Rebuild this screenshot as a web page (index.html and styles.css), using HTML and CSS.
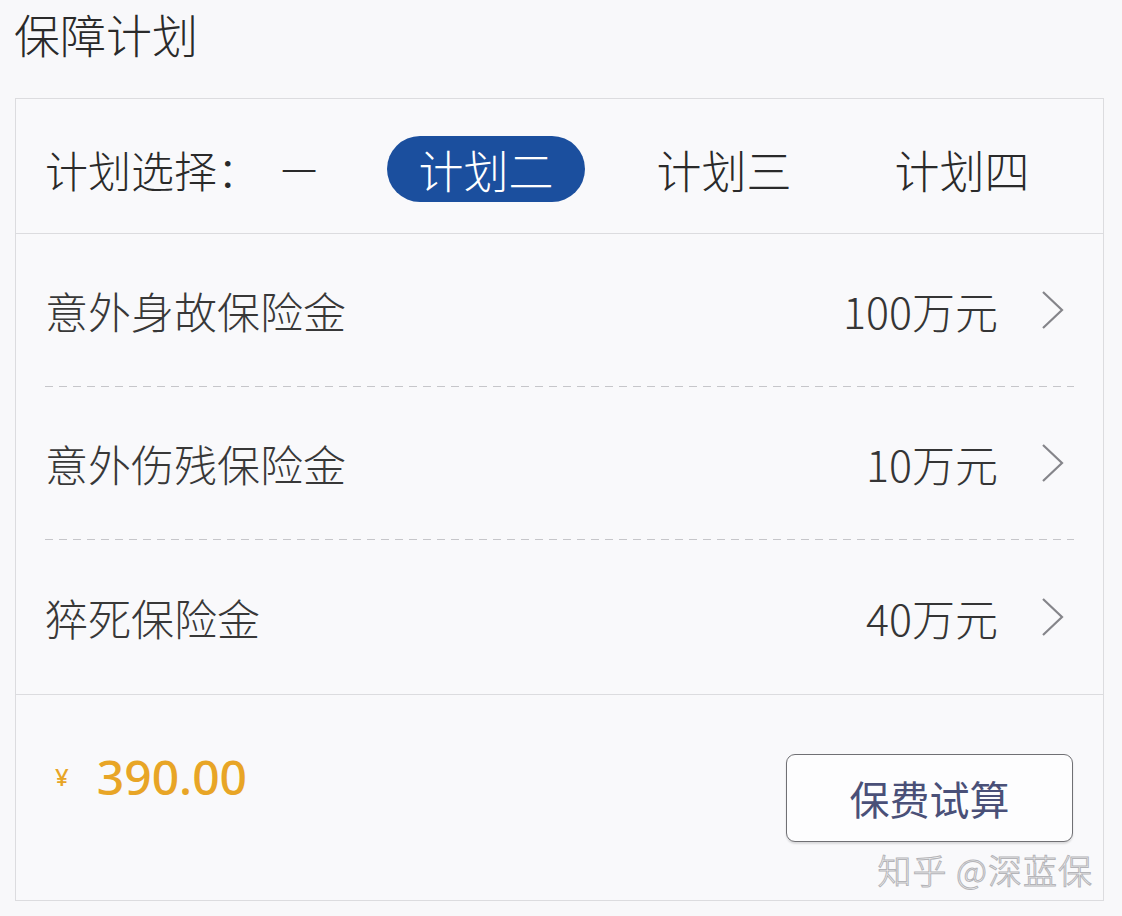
FILE: index.html
```html
<!DOCTYPE html>
<html lang="zh-CN">
<head>
<meta charset="utf-8">
<title>保障计划</title>
<link rel="stylesheet" href="styles.css">
</head>
<body>
<h1 class="title">保障计划</h1>
<section class="card">
  <div class="plan-bar">
    <span class="plan-label">计划选择：</span>
    <span class="plan-opt plan-opt-first">一</span>
    <span class="plan-opt active">计划二</span>
    <span class="plan-opt">计划三</span>
    <span class="plan-opt">计划四</span>
  </div>
  <div class="rows">
    <div class="row">
      <span class="row-name">意外身故保险金</span>
      <span class="row-value">100万元</span>
      <svg class="chev" viewBox="0 0 24 40" width="24" height="40"><polyline points="3,2 22,20 3,38" fill="none" stroke="#85858a" stroke-width="2.2"/></svg>
    </div>
    <div class="row">
      <span class="row-name">意外伤残保险金</span>
      <span class="row-value">10万元</span>
      <svg class="chev" viewBox="0 0 24 40" width="24" height="40"><polyline points="3,2 22,20 3,38" fill="none" stroke="#85858a" stroke-width="2.2"/></svg>
    </div>
    <div class="row">
      <span class="row-name">猝死保险金</span>
      <span class="row-value">40万元</span>
      <svg class="chev" viewBox="0 0 24 40" width="24" height="40"><polyline points="3,2 22,20 3,38" fill="none" stroke="#85858a" stroke-width="2.2"/></svg>
    </div>
  </div>
  <div class="footer">
    <div class="price"><span class="yen">¥</span><span class="amount">390.00</span></div>
    <button class="calc-btn">保费试算</button>
  </div>
  <div class="watermark">知乎 @深蓝保</div>
</section>
</body>
</html>
```
FILE: styles.css
```css
html, body {
  margin: 0;
  padding: 0;
  background: #f8f8fa;
}
body {
  font-family: "Noto Sans CJK SC", "Noto Sans", sans-serif;
  font-weight: 300;
  color: #444;
  width: 1122px;
  height: 916px;
  overflow: hidden;
}
.title {
  margin: 0 0 31px 0;
  padding-left: 14px;
  line-height: 67px;
  font-size: 46px;
  font-weight: 300;
  color: #2a2a2a;
}
.card {
  position: relative;
  margin-left: 15px;
  width: 1087px;
  height: 801px;
  border: 1px solid #dcdcdf;
  background: #f9f9fb;
  display: flex;
  flex-direction: column;
}
.plan-bar {
  height: 128px;
  padding-top: 6px;
  border-bottom: 1px solid #dcdcdf;
  display: flex;
  align-items: center;
  padding-left: 29px;
}
.plan-label {
  font-size: 43px;
  color: #2a2a2a;
  width: 214px;
  white-space: nowrap;
}
.plan-opt {
  display: inline-flex;
  align-items: center;
  justify-content: center;
  height: 66px;
  width: 198px;
  border-radius: 33px;
  font-size: 45px;
  color: #2a2a2a;
  margin-right: 40px;
}
.plan-opt-first {
  width: 80px;
  margin-right: 48px;
  font-size: 36px;
}
.plan-opt.active {
  background: #1b4f9e;
  color: #fff;
}
.rows {
  display: flex;
  flex-direction: column;
}
.row {
  height: 152px;
  margin: 0 29px;
  display: flex;
  align-items: center;
  background-image: repeating-linear-gradient(90deg, #c6c6ca 0 8px, transparent 8px 14px);
  background-size: 100% 1px;
  background-repeat: no-repeat;
  background-position: left bottom;
  padding-bottom: 1px;
}
.row:last-child {
  background-image: none;
  height: 154px;
  margin: 0;
  padding: 0 29px;
  border-bottom: 1px solid #dcdcdf;
}
.row-name {
  flex: 1;
  font-size: 43px;
  color: #383838;
}
.row-value {
  font-size: 43px;
  color: #353535;
  margin-right: 42px;
}
.chev {
  margin-right: 10px;
  flex: none;
}
.footer {
  flex: 1;
  display: flex;
  justify-content: space-between;
  align-items: flex-start;
  padding: 57px 30px 0 39px;
}
.price {
  display: flex;
  align-items: center;
  height: 48px;
  color: #e8a526;
}
.yen {
  font-family: "Noto Sans", sans-serif;
  font-weight: 500;
  font-size: 24px;
  margin-right: 28px;
}
.amount {
  font-family: "Noto Sans", sans-serif;
  font-size: 48px;
  font-weight: 500;
}
.calc-btn {
  margin-top: 2px;
  width: 287px;
  height: 88px;
  border: 1.5px solid #707074;
  border-radius: 9px;
  background: #fdfdfe;
  box-shadow: 0 2px 2px rgba(0,0,0,0.12);
  font-family: "Noto Sans CJK SC", sans-serif;
  font-weight: 400;
  font-size: 40px;
  color: #4a5078;
  padding: 0;
}
.watermark {
  position: absolute;
  right: 10px;
  bottom: 6px;
  font-size: 34px;
  font-weight: 300;
  color: #fafafa;
  -webkit-text-stroke: 1px #b4b4b8;
  letter-spacing: 1px;
}
```
